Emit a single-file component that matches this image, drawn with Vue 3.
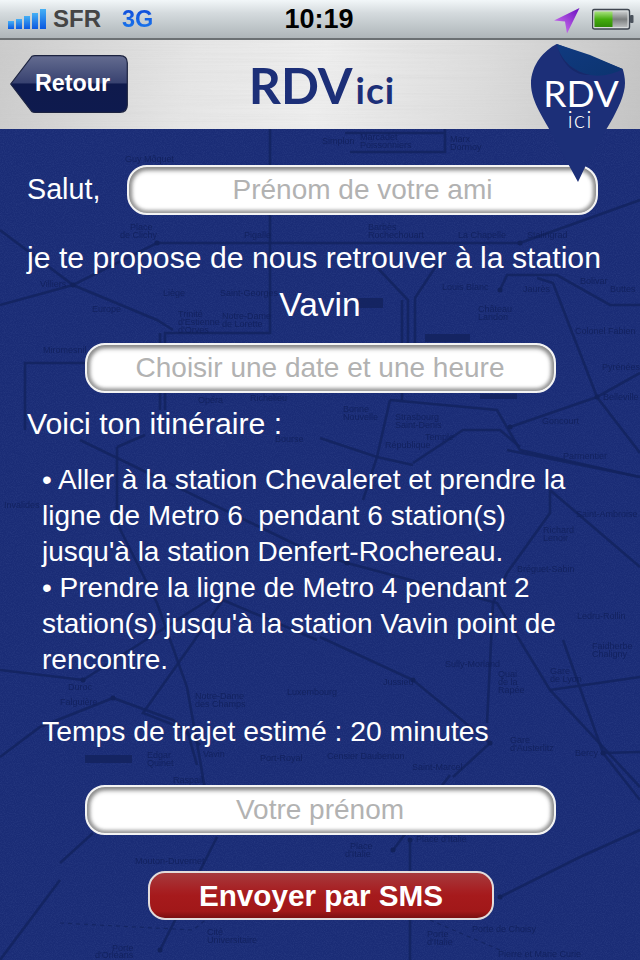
<script setup>
const lines = [
  'M0 230L73 285L157 320L173 330',
  'M0 305L73 285L157 243L520 243L640 200',
  'M270 129V333H165V410',
  'M160 333V410M25 430V363H90',
  'M345 133H445V129M350 152H445V129',
  'M370 260L408 300V365M440 260L415 298V365M402 300V400',
  'M500 290L507 275H557L610 305H640',
  'M537 278L553 283L597 397L640 453',
  'M640 373L597 397L510 427',
  'M390 400L497 410L520 450L640 477',
  'M507 450L640 477',
  'M413 463L463 430H500L520 447',
  'M320 438L377 457L413 465',
  'M390 400L377 457L363 500',
  'M117 447V523L157 603L187 687L200 760L205 790',
  'M117 447L145 435M80 440L307 550L347 563L497 603L550 690L640 787',
  'M223 600L143 713L187 730L197 765',
  'M0 670L83 680L213 597',
  'M0 757L40 727L113 698L173 720L200 745',
  'M223 600L317 640',
  'M550 490L640 567M550 490V513L507 573L493 603L487 723',
  'M320 637L413 680L490 743L453 777',
  'M550 690L640 677M563 640L603 753L640 752M603 753L640 800',
  'M217 837L160 950M410 840V960M393 850L450 775',
  'M500 897L580 857L640 830',
  'M60 863L93 833',
  'M0 960L60 880',
]
const labels = [
  [125,162,'Guy Môquet'],[360,140,'Marcadet'],[360,148,'Poissonniers'],[450,142,'Marx'],[450,150,'Dormoy'],[322,144,'Simplon'],
  [130,230,'Place'],[120,238,'de Clichy'],[244,238,'Pigalle'],[368,230,'Barbès'],[368,238,'Rochechouart'],[458,238,'La Chapelle'],[527,238,'Stalingrad'],
  [40,287,'Villiers'],[163,296,'Liège'],[220,296,'Saint-Georges'],[92,312,'Europe'],[178,317,'Trinité'],[178,325,"d'Estienne"],[178,333,"d'Orves"],[222,319,'Notre-Dame'],[222,327,'de Lorette'],[43,353,'Miromesnil'],
  [442,290,'Louis Blanc'],[523,292,'Jaurès'],[580,284,'Bolivar'],[610,292,'Buttes'],[478,312,'Château'],[478,320,'Landon'],[575,334,'Colonel Fabien'],[602,370,'Pyrénées'],[603,400,'Belleville'],
  [250,401,'Richelieu'],[198,403,'Opéra'],[343,412,'Bonne'],[343,420,'Nouvelle'],[395,420,'Strasbourg'],[395,428,'Saint-Denis'],[425,440,'Temple'],[385,448,'République'],[542,424,'Goncourt'],[563,459,'Parmentier'],[275,442,'Bourse'],
  [4,508,'Invalides'],[68,690,'Duroc'],[60,705,'Falguière'],[195,699,'Notre-Dame'],[195,707,'des Champs'],[287,695,'Luxembourg'],[203,757,'Vavin'],[260,761,'Port-Royal'],[147,758,'Edgar'],[147,766,'Quinet'],
  [576,517,'Saint-Ambroise'],[543,533,'Richard'],[543,541,'Lenoir'],[517,572,'Bréguet-Sabin'],[577,619,'Ledru-Rollin'],[592,649,'Faidherbe'],[592,657,'Chaligny'],[550,674,'Gare'],[550,682,'de Lyon'],[445,667,'Sully-Morland'],[498,677,'Quai'],[498,685,'de la'],[498,693,'Rapée'],[383,685,'Jussieu'],[510,743,'Gare'],[510,751,"d'Austerlitz"],[575,756,'Bercy'],[327,759,'Censier Daubenton'],[412,770,'Saint-Marcel'],[173,783,'Raspail'],
  [350,849,'Place'],[345,857,"d'Italie"],[416,842,"Place d'Italie"],[135,864,'Mouton-Duvernet'],[472,932,'Porte de Choisy'],[427,937,'Porte'],[427,945,"d'Italie"],[498,957,'Pierre et Marie Curie'],[207,935,'Cité'],[207,943,'Universitaire'],[112,951,'Porte'],[95,958,"d'Orléans"],
]
const blocks = [[425,334,45,8],[85,755,47,8],[480,394,37,5],[358,298,25,10]]
const dots = [[192,358],[73,285],[157,243],[520,243],[500,290],[597,397],[510,427],[83,680],[113,698],[347,563],[413,680],[603,753],[490,743],[410,840],[393,850],[500,897],[160,950]]
const route = [
  '• Aller à la station Chevaleret et prendre la',
  'ligne de Metro 6  pendant 6 station(s)',
  "jusqu'à la station Denfert-Rochereau.",
  '• Prendre la ligne de Metro 4 pendant 2',
  "station(s) jusqu'à la station Vavin point de",
  'rencontre.',
]
const bars = [[8,21],[16,19],[24,16],[32,13],[40,9]]
</script>

<template>
  <div class="screen">
    <header class="status">
      <div class="status-left">
        <svg class="signal" width="38" height="30" viewBox="8 0 38 30" aria-hidden="true">
          <defs>
            <linearGradient id="barBlue" x1="0" y1="0" x2="0" y2="1">
              <stop offset="0" stop-color="#45b0f5" />
              <stop offset="1" stop-color="#0a58e0" />
            </linearGradient>
          </defs>
          <rect v-for="b in bars" :key="b[0]" :x="b[0]" :y="b[1]" width="6" :height="29 - b[1]" fill="url(#barBlue)" />
        </svg>
        <span class="carrier">SFR</span>
        <span class="net">3G</span>
      </div>
      <div class="clock">10:19</div>
      <div class="status-right">
        <svg class="arrow" width="28" height="28" viewBox="553 7 28 28" aria-hidden="true">
          <defs>
            <linearGradient id="arrowPurple" x1="1" y1="0" x2="0" y2="1">
              <stop offset="0" stop-color="#6a10c0" />
              <stop offset="1" stop-color="#dd80f5" />
            </linearGradient>
          </defs>
          <path d="M579.5 8L554 20.5L565 21.5L567 33.5Z" fill="url(#arrowPurple)" />
        </svg>
        <svg class="battery" width="42" height="22" viewBox="592 8 42 22" aria-hidden="true">
          <defs>
            <linearGradient id="batGreen" x1="0" y1="0" x2="0" y2="1">
              <stop offset="0" stop-color="#a8e27e" />
              <stop offset=".5" stop-color="#45ad0e" />
              <stop offset="1" stop-color="#2f8a08" />
            </linearGradient>
            <linearGradient id="batGrey" x1="0" y1="0" x2="0" y2="1">
              <stop offset="0" stop-color="#c9cccd" />
              <stop offset=".5" stop-color="#7c7f80" />
              <stop offset="1" stop-color="#b8bbbc" />
            </linearGradient>
          </defs>
          <rect x="592.5" y="9.5" width="37" height="19.5" rx="2" fill="#d8dcdd" stroke="#3f4650" stroke-width="1.4" />
          <rect x="630" y="15" width="3.5" height="8" rx="1" fill="#4a525c" />
          <rect x="594.5" y="11.5" width="33" height="15.5" fill="url(#batGrey)" />
          <rect x="594.5" y="11.5" width="18" height="15.5" fill="url(#batGreen)" />
        </svg>
      </div>
    </header>

    <nav class="nav">
      <svg class="brushed" width="640" height="89" aria-hidden="true">
        <defs>
          <filter id="brush" x="0" y="0" width="100%" height="100%">
            <feTurbulence type="fractalNoise" baseFrequency="0.006 0.7" numOctaves="2" seed="4" />
            <feColorMatrix type="matrix" values="0 0 0 0 .5  0 0 0 0 .5  0 0 0 0 .5  .9 0 0 0 -.32" />
          </filter>
        </defs>
        <rect width="640" height="89" filter="url(#brush)" />
      </svg>
      <button class="back" type="button">
        <svg class="back-shape" width="118" height="58" viewBox="0 0 118 58" aria-hidden="true">
          <defs>
            <linearGradient id="backFill" x1="0" y1="0" x2="0" y2="1">
              <stop offset="0" stop-color="#646c90" />
              <stop offset=".48" stop-color="#384270" />
              <stop offset=".5" stop-color="#0f1a4c" />
              <stop offset="1" stop-color="#0e1a4e" />
            </linearGradient>
          </defs>
          <path d="M0.7 29L22 1.2Q23 .7 25 .7H110Q117.3 .7 117.3 8V50Q117.3 57.3 110 57.3H25Q23 57.3 22 56.8Z" fill="url(#backFill)" stroke="#1c2340" stroke-width="1.2" />
        </svg>
        <span class="back-label">Retour</span>
      </button>
      <div class="brand"><span class="brand-big">RDV</span><span class="brand-small">ici</span></div>
    </nav>

    <svg class="pin" width="96" height="142" viewBox="530 43 96 142" aria-hidden="true">
      <defs>
        <linearGradient id="foldFill" x1="0" y1="0" x2="1" y2="1">
          <stop offset="0" stop-color="#103a80" />
          <stop offset="1" stop-color="#0c3470" />
        </linearGradient>
      </defs>
      <path d="M556.7 44C545 50 531 64 531 84C531 102 545 120 553 136L578 182L587 163C598 140 625 106 625 83C625 78 624 73 622.7 69L600 60Z" fill="#1c2f78" />
      <path d="M556.7 44C561 62 575 72 590 75C602 77 614 74 622.7 69L590 55Z" fill="url(#foldFill)" />
      <path d="M556.7 44C561 62 575 72 590 75C576 76 562 66 556.7 44Z" fill="#16296a" />
      <text x="581" y="107" text-anchor="middle" class="pin-big">RDV</text>
      <text x="580" y="128" text-anchor="middle" class="pin-small">ici</text>
    </svg>

    <main class="main">
      <svg class="map" width="640" height="831" viewBox="0 129 640 831" aria-hidden="true">
        <defs>
          <filter id="grain" x="0" y="0" width="100%" height="100%">
            <feTurbulence type="fractalNoise" baseFrequency="0.9" numOctaves="2" seed="7" />
            <feColorMatrix type="matrix" values="0 0 0 0 .06  0 0 0 0 .1  0 0 0 0 .33  .5 0 0 0 -.19" />
          </filter>
        </defs>
        <rect x="0" y="129" width="640" height="831" filter="url(#grain)" />
        <g class="tracks">
          <path v-for="(d, i) in lines" :key="i" :d="d" />
        </g>
        <path class="dashed" d="M60 923L193 930L255 880M430 920L500 950" />
        <rect v-for="(b, i) in blocks" :key="'b' + i" class="block" :x="b[0]" :y="b[1]" :width="b[2]" :height="b[3]" />
        <circle v-for="(d, i) in dots" :key="'d' + i" class="dot" :cx="d[0]" :cy="d[1]" r="2.5" />
        <g class="stations">
          <text v-for="(l, i) in labels" :key="i" :x="l[0]" :y="l[1]">{{ l[2] }}</text>
        </g>
      </svg>

      <div class="content">
        <div class="greet">
          <span class="text salut">Salut,</span>
          <input class="field" placeholder="Prénom de votre ami" />
        </div>
        <p class="text line propose">je te propose de nous retrouver à la station</p>
        <p class="text line station">Vavin</p>
        <div class="center second"><input class="field" placeholder="Choisir une date et une heure" /></div>
        <p class="text line voici">Voici ton itinéraire :</p>
        <div class="route">
          <div v-for="r in route" :key="r" class="text route-line">{{ r }}</div>
        </div>
        <p class="text route-time">Temps de trajet estimé : 20 minutes</p>
        <div class="center third"><input class="field" placeholder="Votre prénom" /></div>
        <div class="center"><button class="send" type="button">Envoyer par SMS</button></div>
      </div>
    </main>
  </div>
</template>

<style>
html, body { margin: 0; padding: 0; background: #1a2c75; }
</style>

<style scoped>
.screen {
  position: relative;
  width: 640px;
  height: 960px;
  overflow: hidden;
  display: flex;
  flex-direction: column;
  font-family: "Liberation Sans", Arial, sans-serif;
}
.status {
  height: 38px;
  flex: none;
  display: grid;
  grid-template-columns: 1fr auto 1fr;
  align-items: center;
  background: linear-gradient(#f2f7f9, #d4dadd 35%, #aeb5b9);
  border-bottom: 2px solid #6b7073;
}
.status-left { display: flex; align-items: center; height: 38px; padding-left: 8px; }
.signal { display: block; align-self: flex-start; }
.carrier { font-size: 24px; font-weight: 700; color: #454545; margin-left: 7px; }
.net {
  font-size: 23.5px;
  font-weight: 700;
  margin-left: 21px;
  color: transparent;
  background: linear-gradient(#1047d8, #1a7ff0);
  -webkit-background-clip: text;
  background-clip: text;
}
.clock { font-size: 27px; font-weight: 700; color: #000; margin-left: -2px; }
.status-right { display: flex; align-items: flex-start; height: 38px; justify-content: flex-end; padding-right: 6px; gap: 11px; }
.arrow { margin-top: 7px; display: block; }
.battery { margin-top: 8px; display: block; }

.nav {
  position: relative;
  height: 89px;
  flex: none;
  display: grid;
  grid-template-columns: 1fr auto 1fr;
  align-items: center;
  background: linear-gradient(100deg, #cbcbcb, #e6e6e6 30%, #eeeeee 50%, #dcdcdc 75%, #c4c4c4);
}
.brushed { position: absolute; inset: 0; opacity: .25; }
.back {
  position: relative;
  justify-self: start;
  width: 118px;
  height: 58px;
  margin-left: 10px;
  margin-top: -1px;
  padding: 0;
  border: 0;
  background: none;
  display: flex;
  align-items: center;
}
.back-shape { position: absolute; inset: 0; }
.back-label {
  position: relative;
  margin-left: 25px;
  font: 700 23.3px "Liberation Sans", Arial, sans-serif;
  color: #fff;
  margin-top: -2px;
}
.brand {
  position: relative;
  font-family: Lato, sans-serif;
  color: #1c2f78;
  display: flex;
  align-items: baseline;
  margin-left: 4px;
  margin-top: 1px;
}
.brand-big { font-size: 50px; font-weight: 700; line-height: 1; }
.brand-small { font-size: 37px; font-weight: 700; line-height: 1; margin-left: 3px; letter-spacing: 1px; }

.pin { position: absolute; left: 530px; top: 43px; z-index: 2; }
.pin-big { font-family: Lato, sans-serif; font-size: 37px; fill: #fff; font-weight: 400; }
.pin-small { font-family: Lato, sans-serif; font-size: 24px; fill: #fff; font-weight: 300; letter-spacing: 1px; }

.main {
  position: relative;
  flex: 1;
  background: #1a2c76;
  overflow: hidden;
}
.map { position: absolute; inset: 0; }
.tracks path { fill: none; stroke: #13235f; stroke-width: 2.6; opacity: .85; }
.dashed { fill: none; stroke: #13235f; stroke-width: 1.2; stroke-dasharray: 4 4; opacity: .8; }
.block { fill: #14245f; opacity: .9; }
.dot { fill: #12225c; }
.stations text { font: 9px "Liberation Sans", Arial, sans-serif; fill: #0f1e58; opacity: .8; }

.content { position: relative; padding-top: 36px; display: flex; flex-direction: column; }
.text { color: #fff; font-size: 28px; margin: 0; white-space: pre; }
.greet { display: flex; align-items: center; padding-left: 27px; height: 50px; }
.salut { width: 100px; margin-top: -2px; font-size: 28.7px; line-height: 34px; }
.line { padding-left: 27px; font-size: 30.2px; line-height: 36px; }
.propose { margin-top: 25px; }
.station { text-align: center; padding-left: 0; margin-top: 10px; font-size: 33.5px; line-height: 38px; }
.center { display: flex; justify-content: center; }
.second { margin-top: 19px; }
.voici { margin-top: 13px; }
.field {
  box-sizing: border-box;
  width: 471px;
  height: 50px;
  border: 2px solid #f4f4f4;
  border-radius: 20px;
  background: #fff;
  box-shadow: inset 0 2px 5px 1px #8b8b8b, inset 0 -1px 4px 1px #a5a5a5, inset 2px 0 5px #a0a0a0, inset -2px 0 5px #a0a0a0;
  font: 28px "Liberation Sans", Arial, sans-serif;
  color: #333;
  text-align: center;
  padding: 0 8px;
  outline: none;
}
.field::placeholder { color: #b2b2b2; opacity: 1; }
.route { margin-top: 20px; padding-left: 42px; }
.route-line { line-height: 36px; }
.route-time { margin-top: 35px; padding-left: 42px; line-height: 36px; font-size: 28.3px; }
.third { margin-top: 36px; margin-bottom: 36px; }
.send {
  box-sizing: border-box;
  width: 346px;
  height: 49px;
  margin-left: 2px;
  border: 2px solid #e2dcdc;
  border-radius: 17px;
  background: linear-gradient(#a63a3d, #a72225 35%, #a61a1c 50%, #a11819 85%, #7a0f11);
  color: #fff;
  font: 700 29.7px "Liberation Sans", Arial, sans-serif;
  padding: 0;
}
</style>
